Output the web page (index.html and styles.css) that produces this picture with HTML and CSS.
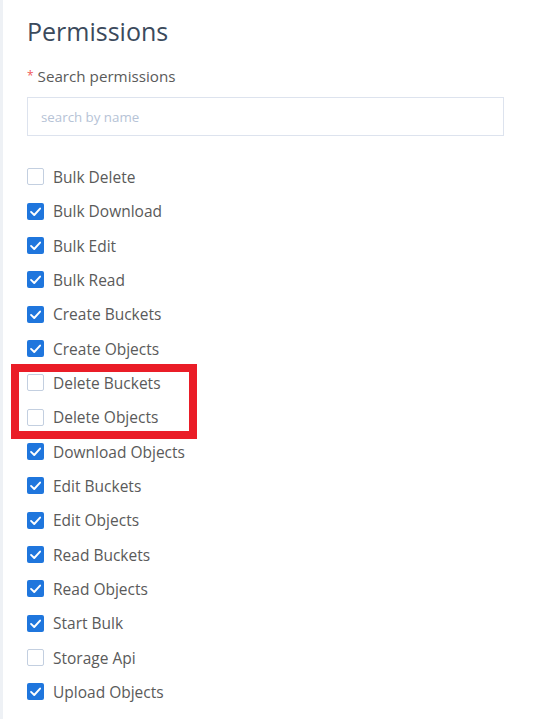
FILE: index.html
```html
<!DOCTYPE html>
<html lang="en">
<head>
  <meta charset="UTF-8">
  <meta name="viewport" content="width=device-width, initial-scale=1.0">
  <title>Permissions</title>
  <link rel="stylesheet" href="styles.css">
</head>
<body>
  <div class="panel">
    <h2 class="title">Permissions</h2>

    <label class="field-label" for="search"><span class="req">*</span> Search permissions</label>
    <input type="text" id="search" class="search" placeholder="search by name">

    <ul class="perm-list">
      <li class="perm"><span class="box"></span>Bulk Delete</li>
      <li class="perm"><span class="box checked"><svg viewBox="0 0 16 16"><polyline points="3.8,8.4 6.8,11.3 12.3,5.2"/></svg></span>Bulk Download</li>
      <li class="perm"><span class="box checked"><svg viewBox="0 0 16 16"><polyline points="3.8,8.4 6.8,11.3 12.3,5.2"/></svg></span>Bulk Edit</li>
      <li class="perm"><span class="box checked"><svg viewBox="0 0 16 16"><polyline points="3.8,8.4 6.8,11.3 12.3,5.2"/></svg></span>Bulk Read</li>
      <li class="perm"><span class="box checked"><svg viewBox="0 0 16 16"><polyline points="3.8,8.4 6.8,11.3 12.3,5.2"/></svg></span>Create Buckets</li>
      <li class="perm"><span class="box checked"><svg viewBox="0 0 16 16"><polyline points="3.8,8.4 6.8,11.3 12.3,5.2"/></svg></span>Create Objects</li>
      <li class="highlight">
        <ul class="perm-list">
          <li class="perm"><span class="box"></span>Delete Buckets</li>
          <li class="perm"><span class="box"></span>Delete Objects</li>
        </ul>
      </li>
      <li class="perm"><span class="box checked"><svg viewBox="0 0 16 16"><polyline points="3.8,8.4 6.8,11.3 12.3,5.2"/></svg></span>Download Objects</li>
      <li class="perm"><span class="box checked"><svg viewBox="0 0 16 16"><polyline points="3.8,8.4 6.8,11.3 12.3,5.2"/></svg></span>Edit Buckets</li>
      <li class="perm"><span class="box checked"><svg viewBox="0 0 16 16"><polyline points="3.8,8.4 6.8,11.3 12.3,5.2"/></svg></span>Edit Objects</li>
      <li class="perm"><span class="box checked"><svg viewBox="0 0 16 16"><polyline points="3.8,8.4 6.8,11.3 12.3,5.2"/></svg></span>Read Buckets</li>
      <li class="perm"><span class="box checked"><svg viewBox="0 0 16 16"><polyline points="3.8,8.4 6.8,11.3 12.3,5.2"/></svg></span>Read Objects</li>
      <li class="perm"><span class="box checked"><svg viewBox="0 0 16 16"><polyline points="3.8,8.4 6.8,11.3 12.3,5.2"/></svg></span>Start Bulk</li>
      <li class="perm"><span class="box"></span>Storage Api</li>
      <li class="perm"><span class="box checked"><svg viewBox="0 0 16 16"><polyline points="3.8,8.4 6.8,11.3 12.3,5.2"/></svg></span>Upload Objects</li>
    </ul>
  </div>
</body>
</html>
```

FILE: styles.css
```css
body {
  margin: 0;
  padding: 0;
  font-family: "Open Sans", "Noto Sans", sans-serif;
  background: #fff;
  color: #5a5a5a;
}

.panel {
  min-height: 719px;
  box-sizing: border-box;
  border-left: 3px solid #eef1f5;
  padding: 14px 34px 0 24px;
}

.title {
  margin: 0;
  font-size: 25px;
  font-weight: 500;
  color: #3b4a5c;
  line-height: 34px;
}

.field-label {
  display: block;
  margin-top: 18px;
  font-size: 15.2px;
  line-height: 20px;
  color: #5a5a5a;
}

.field-label .req {
  color: #f05a5a;
  font-size: 12px;
  vertical-align: 2px;
}

.search {
  display: block;
  box-sizing: border-box;
  width: 477px;
  height: 39px;
  margin-top: 11px;
  padding: 0 13px;
  border: 1.5px solid #dde3ee;
  border-radius: 0;
  font-family: inherit;
  font-size: 13.3px;
  color: #555;
  outline: none;
}

.search::placeholder {
  color: #b6c3d6;
}

.perm-list {
  list-style: none;
  margin: 0;
  padding: 0;
}

.panel > .perm-list {
  margin-top: 23.8px;
}

.perm {
  display: flex;
  align-items: center;
  gap: 9px;
  height: 34.33px;
  font-size: 15.5px;
  color: #5a5a5a;
}

.box {
  box-sizing: border-box;
  width: 17px;
  height: 17px;
  border: 1.5px solid #c3cfe0;
  border-radius: 2px;
  background: #fff;
  flex-shrink: 0;
}

.box.checked {
  border: none;
  background: #1f76dd;
}

.box svg {
  display: block;
  width: 17px;
  height: 17px;
  fill: none;
  stroke: #fff;
  stroke-width: 1.8;
  stroke-linecap: round;
  stroke-linejoin: round;
}

.highlight {
  position: relative;
}

.highlight::after {
  content: "";
  position: absolute;
  top: -2px;
  bottom: -5px;
  left: -16px;
  width: 186px;
  box-sizing: border-box;
  border: 8.5px solid #ea1d27;
  pointer-events: none;
}
```
